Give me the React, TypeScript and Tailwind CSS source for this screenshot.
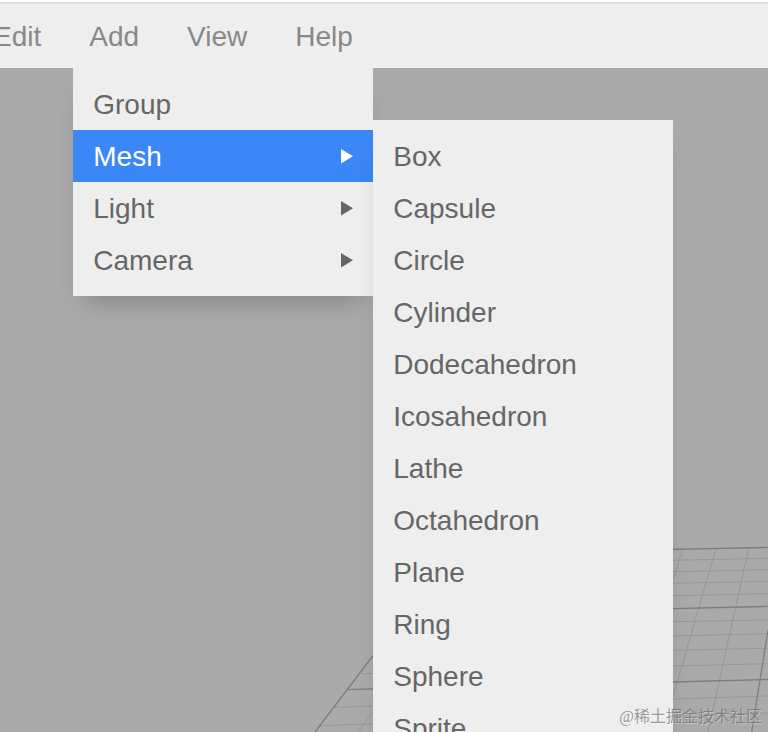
const addItems = [
  { label: "Group", sub: false },
  { label: "Mesh", sub: true },
  { label: "Light", sub: true },
  { label: "Camera", sub: true },
];

const meshItems = [
  "Box",
  "Capsule",
  "Circle",
  "Cylinder",
  "Dodecahedron",
  "Icosahedron",
  "Lathe",
  "Octahedron",
  "Plane",
  "Ring",
  "Sphere",
  "Sprite",
];

const menuShadow = "bg-[#eeeeee] py-[10px] shadow-[0_16px_24px_-12px_rgba(0,0,0,0.25)]";

function Arrow() {
  return (
    <svg width="14" height="16" viewBox="0 0 14 16" aria-hidden="true">
      <path d="M2 0 L14 7.3 L2 14.6 Z" fill="currentColor" />
    </svg>
  );
}

// Perspective floor grid
function FloorGrid() {
  return (
    <svg className="absolute top-0 left-0" width="768" height="664" viewBox="0 68 768 664" fill="none" aria-hidden="true">
      {/* minor lines */}
      <path
        stroke="#979797"
        strokeWidth="1"
        d="M673 560.3L768 558.3M673 571.7L768 569.7M673 583.3L768 581.3M673 595.7L768 593.7
           M673 621.7L768 620M673 636L768 633.7M673 650.3L768 648.3M673 666L768 663.7
           M673 699L768 696M673 715.5L768 713
           M682.7 549.5L673 580M715.7 549L673 697M748.7 548L708 732
           M361 674L373 673.3M334 707.3L373 706M320 725.6L373 724M373 711.7L358 732"
      />
      {/* major lines */}
      <path
        stroke="#7c7c7c"
        strokeWidth="1.3"
        d="M673 549.4L768 547.4M673 608.7L768 606.4M673 682L768 679.5M768 630L751.7 732
           M373 655.7L315 732M346.7 689.7L373 688.8"
      />
    </svg>
  );
}

function MeshMenu() {
  return (
    <ul className={`absolute -top-[10px] left-full w-[300px] ${menuShadow}`}>
      {meshItems.map((label) => (
        <li key={label}>
          <button className="flex h-[52px] w-full items-center px-5 pt-[2px] text-left text-[#666666]">
            {label}
          </button>
        </li>
      ))}
    </ul>
  );
}

function AddMenu() {
  return (
    <ul className={`absolute top-full left-0 z-10 w-[300px] ${menuShadow}`}>
      {addItems.map((item) => (
        <li key={item.label} className="relative">
          <button
            className={`flex h-[52px] w-full items-center justify-between px-5 pt-[2px] text-left ${
              item.label === "Mesh" ? "bg-[#3b87f7] text-white" : "text-[#666666]"
            }`}
          >
            {item.label}
            {item.sub && <Arrow />}
          </button>
          {item.label === "Mesh" && <MeshMenu />}
        </li>
      ))}
    </ul>
  );
}

export default function App() {
  return (
    <div className="flex h-screen flex-col overflow-hidden bg-white pt-[2px] font-['Liberation_Sans',Arial,sans-serif] text-[28px] leading-8">
      {/* Menu bar */}
      <nav className="border-t-2 border-[#e0e0e0] bg-[#eeeeee]">
        <ul className="-ml-[23px] flex gap-4 text-[#888888]">
          <li>
            <button className="h-16 px-4 pt-[2px]">Edit</button>
          </li>
          <li className="relative">
            <button className="h-16 px-4 pt-[2px]">Add</button>
            <AddMenu />
          </li>
          <li>
            <button className="h-16 px-4 pt-[2px]">View</button>
          </li>
          <li>
            <button className="h-16 px-4 pt-[2px]">Help</button>
          </li>
        </ul>
      </nav>

      {/* Viewport */}
      <main className="relative flex-1 bg-[#aaaaaa]">
        <FloorGrid />
      </main>

      <p className="absolute right-[6px] bottom-[3px] z-20 font-['Liberation_Serif','Noto_Sans_CJK_SC',serif] text-base leading-6 text-[#666666a6] [text-shadow:1px_1px_0_#ffffff59]">
        @稀土掘金技术社区
      </p>
    </div>
  );
}
